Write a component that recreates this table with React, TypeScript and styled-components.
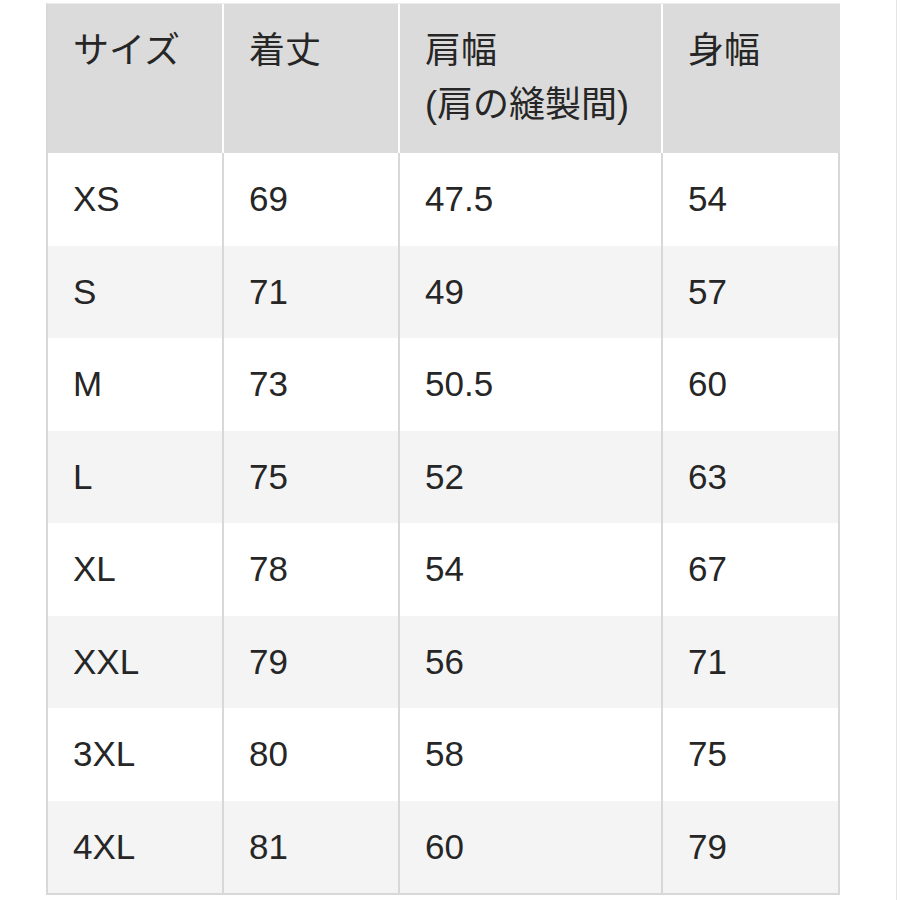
import styled, { createGlobalStyle } from 'styled-components';

const GlobalStyle = createGlobalStyle`
    html, body {
        margin:0;
        padding:0;
        background:#ffffff;
    }
    body {
        font-family:"Liberation Sans", "Noto Sans CJK JP", sans-serif;
        color:#262626;
    }
`

const Page = styled.div`
    width:897px;
    height:900px;
    border-right:1px solid #e4e4e4;
    padding:3px 0 0 46px;
    box-sizing:border-box;
`

const Table = styled.table`
    border-collapse:separate;
    border-spacing:0;
    table-layout:fixed;
    width:794px;
    border-left:2px solid #d8d8d8;
    border-bottom:2px solid #d8d8d8;
    border-top:1px solid #ececec;
`

const HeadCell = styled.th`
    background:#dbdbdb;
    height:149px;
    padding:20px 0 0 25px;
    box-sizing:border-box;
    text-align:left;
    vertical-align:top;
    font-weight:400;
    font-size:36px;
    line-height:54px;
    border-right:2px solid #ffffff;
    &:last-child {
        border-right:2px solid #dbdbdb;
    }
`

const Row = styled.tr<{ $shaded: boolean }>`
    background:${props => props.$shaded ? '#f4f4f4' : '#ffffff'};
`

const Cell = styled.td`
    height:92.5px;
    padding:0 0 0 25px;
    box-sizing:border-box;
    vertical-align:middle;
    font-size:35px;
    border-right:2px solid #d8d8d8;
`

const widths = [176, 176, 263, 177];

const sizes = [
    ['XS', '69', '47.5', '54'],
    ['S', '71', '49', '57'],
    ['M', '73', '50.5', '60'],
    ['L', '75', '52', '63'],
    ['XL', '78', '54', '67'],
    ['XXL', '79', '56', '71'],
    ['3XL', '80', '58', '75'],
    ['4XL', '81', '60', '79'],
];

function App() {
    return (
        <>
            <GlobalStyle />
            <Page>
                <Table>
                    <colgroup>
                        {widths.map((w, i) => <col key={i} style={{ width: w }} />)}
                    </colgroup>
                    <thead>
                        <tr>
                            <HeadCell>サイズ</HeadCell>
                            <HeadCell>着丈</HeadCell>
                            <HeadCell>肩幅<br />(肩の縫製間)</HeadCell>
                            <HeadCell>身幅</HeadCell>
                        </tr>
                    </thead>
                    <tbody>
                        {sizes.map((row, i) =>
                            <Row key={row[0]} $shaded={i % 2 === 1}>
                                {row.map((v, j) => <Cell key={j}>{v}</Cell>)}
                            </Row>
                        )}
                    </tbody>
                </Table>
            </Page>
        </>
    );
}

export default App;
